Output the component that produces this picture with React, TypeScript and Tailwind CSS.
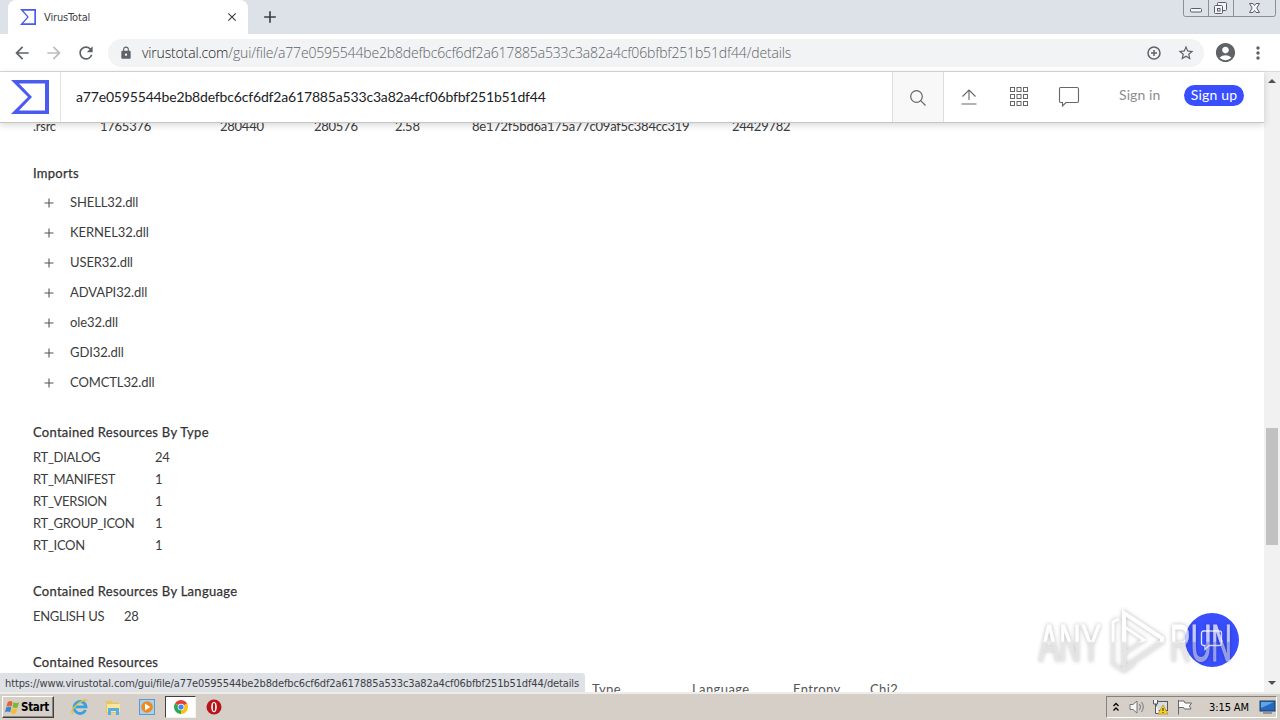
import React from "react";
import { MdArrowBack, MdArrowForward, MdRefresh, MdLock, MdStarBorder, MdAccountCircle, MdMoreVert, MdAdd, MdClose } from "react-icons/md";

const HASH = "a77e0595544be2b8defbc6cf6df2a617885a533c3a82a4cf06bfbf251b51df44";

const SECTION_ROW = [".rsrc", "1765376", "280440", "280576", "2.58", "8e172f5bd6a175a77c09af5c384cc319", "24429782"];

const IMPORTS = ["SHELL32.dll", "KERNEL32.dll", "USER32.dll", "ADVAPI32.dll", "ole32.dll", "GDI32.dll", "COMCTL32.dll"];

const RESOURCE_TYPES: [string, number][] = [
  ["RT_DIALOG", 24],
  ["RT_MANIFEST", 1],
  ["RT_VERSION", 1],
  ["RT_GROUP_ICON", 1],
  ["RT_ICON", 1],
];

export default function App() {
  return (
    <div className="flex flex-col w-[1280px] h-[720px] overflow-hidden bg-white font-['Lato',sans-serif]">
      <TabStrip />
      <Toolbar />
      <div className="relative flex h-[620px] shrink-0">
        <div className="flex flex-col flex-1 min-w-0">
          <VtHeader />
          <Details />
        </div>
        <Scrollbar />
        <div className="absolute left-0 top-[601px] w-[585px] h-[19px] bg-[#dee1e6] rounded-tr-[3px] pl-[5px] pt-[3px] flex items-center text-[11px] tracking-[-0.125px] text-[#3c4043] whitespace-nowrap font-['DejaVu_Sans_Condensed','DejaVu_Sans',sans-serif] [font-stretch:condensed]">
          https://www.virustotal.com/gui/file/{HASH}/details
        </div>
        <div className="absolute left-[1185px] top-[541px] size-[54px] rounded-full bg-[#394eff] flex items-center justify-center">
          <svg width="24" height="24" viewBox="0 0 24 24" fill="none" stroke="#e4e8ff" strokeWidth="1.3">
            <path d="M3.5 3h16a2 2 0 0 1 2 2v10.500a2 2 0 0 1-2 2H9L5 21.500v-4H3.500a2 2 0 0 1-2-2V5a2 2 0 0 1 2-2Z" />
          </svg>
        </div>
        <Watermark />
      </div>
      <Taskbar />
    </div>
  );
}

function VtLogo({ className }: { className: string }) {
  return (
    <svg className={className} viewBox="0 0 38 34" preserveAspectRatio="none">
      <path fillRule="evenodd" fill="#4a5bf0" d="M0 0H38V34H0L17 17ZM8 3.500L21 17L8 30.500H34V3.500Z" />
    </svg>
  );
}

function TabStrip() {
  return (
    <div className="flex h-[34px] shrink-0 bg-[#dde1e8]">
      <div className="ml-2 w-[240px] h-full bg-white rounded-t-[8px] flex items-center pl-3 pr-[9px]">
        <VtLogo className="w-4 h-4" />
        <span className="ml-[8px] mt-[2px] flex-1 text-[11px] tracking-[-0.15px] text-[#3c4043] font-['DejaVu_Sans_Condensed','DejaVu_Sans',sans-serif] [font-stretch:condensed]">VirusTotal</span>
        <MdClose className="size-[14px] text-[#3c4043]" />
      </div>
      <MdAdd className="ml-[12px] mt-[7px] size-5 text-[#3c4043]" />
      <div className="flex-1" />
      {/* window buttons */}
      <svg className="mr-[2px]" width="95" height="18" viewBox="0 0 95 18" fill="none" stroke="#8b8e95">
        <path d="M.5 0V14.500Q.5 16.500 2.500 16.500H90.500Q92.500 16.500 92.500 14.500V0M25.500 0V16M50.500 0V16" />
        <g stroke="#5b5e66" fill="#f4f5f7">
          <rect x="7.500" y="8.500" width="11" height="3.500" rx="1" />
          <rect x="34.500" y="2.500" width="9" height="8" rx="1" />
          <rect x="31.500" y="5.500" width="8" height="8" rx="1" />
          <rect x="34.500" y="8.500" width="2.500" height="2.500" />
          <path d="M66.500 3.500H70L71.500 5.500L73 3.500H76.500L73.800 8L76.500 12.500H73L71.500 10.500L70 12.500H66.500L69.200 8Z" />
        </g>
      </svg>
    </div>
  );
}

function Toolbar() {
  return (
    <div className="flex items-center h-[38px] shrink-0 border-b border-[#d8d9db] bg-white pl-3 text-[#5f6368]">
      <MdArrowBack className="size-5" />
      <MdArrowForward className="size-5 ml-3 text-[#bbbdc0]" />
      <MdRefresh className="size-5 ml-3" />
      <div className="ml-3 w-[1096px] h-7 rounded-full bg-[#f1f3f4] flex items-center pl-[11px] pr-[9px]">
        <MdLock className="size-[14px]" />
        <span className="ml-[9px] flex-1 text-[14px] tracking-[-0.16px] text-[#5f6368] whitespace-nowrap font-['Open_Sans',sans-serif] font-light">
          <span className="text-[#202124]">virustotal.com</span>/gui/file/{HASH}/details
        </span>
        <svg width="16" height="16" viewBox="0 0 16 16" fill="none" stroke="#5f6368" strokeWidth="1.500">
          <circle cx="8" cy="8" r="6" />
          <path d="M8 5v6M5 8h6" />
        </svg>
        <MdStarBorder className="size-[18px] ml-[15px]" />
      </div>
      <MdAccountCircle className="size-[23px] ml-[10px]" />
      <MdMoreVert className="size-5 ml-[11px]" />
    </div>
  );
}

function VtHeader() {
  return (
    <div className="relative z-10 flex h-[51px] shrink-0 bg-white border-b border-[#c6c6c6] shadow-[0_2px_7px_rgba(0,0,0,0.16)]">
      <div className="w-[61px] border-r border-[#e4e4e4] flex items-center pl-[11px]">
        <VtLogo className="w-[38px] h-[34px]" />
      </div>
      <div className="w-[831px] pl-[15px] pb-px flex items-center text-[14px] tracking-[-0.17px] text-[#202124]">{HASH}</div>
      <div className="w-[52px] bg-[#f8f8f8] border-x border-[#dedede] flex items-center justify-center">
        <svg className="mt-px" width="18" height="18" viewBox="0 0 18 18" fill="none" stroke="#666" strokeWidth="1.200">
          <circle cx="7.500" cy="7.500" r="5.800" />
          <path d="M11.700 11.700L16.500 16.500" />
        </svg>
      </div>
      <svg className="ml-[16px] mt-[16px]" width="18" height="18" viewBox="0 0 18 18" fill="none" stroke="#666" strokeWidth="1.100">
        <path d="M9 12V2.500M2.500 8.500L9 2L15.500 8.500M1.500 16H16.500" />
      </svg>
      <svg className="ml-[31px] mt-[14px]" width="20" height="21" viewBox="0 0 20 21" fill="none" stroke="#666" strokeWidth="1">
        {[1.5, 8.5, 15.5].map(y => [1.5, 8, 14.5].map(x => <rect key={`${x}-${y}`} x={x} y={y} width="4" height="4" />))}
      </svg>
      <svg className="ml-[29px] mt-[14px]" width="22" height="22" viewBox="0 0 22 22" fill="none" stroke="#666" strokeWidth="1.100">
        <path d="M2.500 1.500H19Q20.500 1.500 20.500 3V15Q20.500 16.500 19 16.500H8L4.500 20V16.500H2.500Q1.500 16.500 1.500 15V3Q1.500 1.500 2.500 1.500Z" />
      </svg>
      <span className="ml-[39px] mt-[13px] w-[65px] text-[14px] leading-[20px] tracking-[0.1px] text-[#8d8d8d]">Sign in</span>
      <span className="mt-[13px] w-[60px] h-[21px] rounded-full bg-[#394eff] text-white text-[14px] leading-[20px] tracking-[0.15px] text-center">Sign up</span>
    </div>
  );
}

function Details() {
  return (
    <div className="flex-1 min-h-0 overflow-hidden pl-[33px] text-[13px] leading-[22px] text-[#3c3c3c]">
      <div className="-mt-[7px] h-5 leading-[20px] tracking-[-0.25px] grid grid-cols-[67px_120px_94px_81px_77px_260px_100px]">
        {SECTION_ROW.map(cell => <span key={cell}>{cell}</span>)}
      </div>

      <Title className="mt-[27px]">Imports</Title>
      <div className="mt-1">
        {IMPORTS.map(dll => (
          <div key={dll} className="h-[30px] flex items-center pl-[11px]">
            <svg className="mt-px" width="10" height="10" viewBox="0 0 10 10" stroke="#555" strokeWidth="1.100">
              <path d="M5 .5V9.500M.5 5H9.500" />
            </svg>
            <span className="ml-4 tracking-[-0.1px]">{dll}</span>
          </div>
        ))}
      </div>

      <Title className="mt-[25px]">Contained Resources By Type</Title>
      <div className="mt-1 grid grid-cols-[122px_40px] tracking-[-0.3px]">
        {RESOURCE_TYPES.map(([name, count]) => (
          <React.Fragment key={name}>
            <span>{name}</span>
            <span>{count}</span>
          </React.Fragment>
        ))}
      </div>

      <Title className="mt-[25px]">Contained Resources By Language</Title>
      <div className="mt-1 grid grid-cols-[91px_40px] tracking-[-0.3px]">
        <span>ENGLISH US</span>
        <span>28</span>
      </div>

      <Title className="mt-[25px]">Contained Resources</Title>
      <div className="mt-[7px] pl-[559px] grid grid-cols-[100px_101px_77px_60px] leading-[20px] tracking-[0.4px] text-[#555]">
        <span>Type</span>
        <span>Language</span>
        <span>Entropy</span>
        <span>Chi2</span>
      </div>
    </div>
  );
}

function Title({ children, className }: { children: React.ReactNode; className: string }) {
  return <div className={`h-5 leading-[20px] text-[13px] tracking-[0.28px] text-[#333] [-webkit-text-stroke:0.25px_#333] ${className}`}>{children}</div>;
}

function Scrollbar() {
  return (
    <div className="w-4 bg-[#f1f1f1] flex flex-col items-center">
      <svg width="16" height="17" viewBox="0 0 16 17"><path d="M4 11H12L8 7Z" fill="#505050" /></svg>
      <div className="mt-[339px] w-3 h-[117px] bg-[#c1c1c1]" />
      <div className="flex-1" />
      <svg width="16" height="17" viewBox="0 0 16 17"><path d="M4 6H12L8 10Z" fill="#505050" /></svg>
    </div>
  );
}

function Watermark() {
  return (
    <svg className="absolute left-[1030px] top-[530px] opacity-70 drop-shadow-[0_0_2px_rgba(0,0,0,0.4)]" width="210" height="80" viewBox="0 0 210 80">
      <defs>
        <linearGradient id="wm" gradientUnits="userSpaceOnUse" x1="0" y1="0" x2="0" y2="80">
          <stop offset="0.49" stopColor="#fff" />
          <stop offset="0.51" stopColor="#dcdcdc" stopOpacity="0.8" />
        </linearGradient>
      </defs>
      <g fill="url(#wm)" stroke="url(#wm)" strokeWidth="1" fontFamily="'Liberation Sans Narrow','Liberation Sans',sans-serif" fontSize="52">
        <text x="9" y="59" textLength="62" lengthAdjust="spacingAndGlyphs">ANY</text>
        <text x="140" y="59" textLength="62" lengthAdjust="spacingAndGlyphs">RUN</text>
      </g>
      <g fill="none" stroke="url(#wm)" strokeWidth="4">
        <path d="M94 11L132 36V40L94 66Z" />
        <path d="M89 17L83 20V62L94 69L104 62M95 25V51L114 38Z" strokeWidth="3" />
      </g>
    </svg>
  );
}

function Taskbar() {
  return (
    <div className="flex items-center h-[28px] shrink-0 bg-[#d5cfc8] border-t-2 border-t-[#eeece8] text-black font-['DejaVu_Sans_Condensed','DejaVu_Sans',sans-serif] [font-stretch:condensed]">
      <div className="ml-[2px] w-[52px] h-[22px] bg-[#d5cfc8] border border-t-white border-l-white border-r-[#404040] border-b-[#404040] shadow-[inset_-1px_-1px_#8a8680] flex items-center pl-[2px]">
        <svg width="15" height="15" viewBox="0 0 16 16">
          <path d="M3 2Q6 0 8 2L7 7Q4 5 1.500 7Z" fill="#e8602c" />
          <path d="M9 2.500Q12 4 15 2.500L13.500 8Q11 9 8 7.500Z" fill="#7cb83c" />
          <path d="M1.300 8Q4 6 6.800 8L5.500 13Q3 11.500 0 13Z" fill="#3d83d0" />
          <path d="M7.700 8.500Q10 10 13 9L11.500 14.500Q9 15.500 6.300 13.500Z" fill="#f7bd32" />
        </svg>
        <span className="ml-px mt-px text-[11.500px] font-bold tracking-[-0.3px]">Start</span>
      </div>

      <svg className="ml-[17px]" width="18" height="18" viewBox="0 0 18 18" fill="none">
        <path d="M14.500 12A6 6 0 1 1 15 8.800H5" stroke="#36a3de" strokeWidth="2.800" />
        <path d="M2 16Q-1 13 5 7.500Q13 .5 16.500 2.500" stroke="#efbd3a" strokeWidth="1.400" />
      </svg>
      <svg className="ml-[16px]" width="16" height="17" viewBox="0 0 16 17">
        <path d="M1 2H6L7 3.500H14V14H1Z" fill="#e9c55c" />
        <path d="M2 5H15V13H2Z" fill="#f9e59c" />
        <path d="M3 16V9H14V16H11V12H6V16Z" fill="#58aee0" />
      </svg>
      <svg className="ml-[18px]" width="16" height="16" viewBox="0 0 16 16">
        <rect x=".5" y=".5" width="15" height="15" fill="#a7d1f0" stroke="#5a9ad0" />
        <circle cx="8" cy="8" r="5.800" fill="#f08a1c" />
        <path d="M6 4.500L11.300 8L6 11.500Z" fill="#fff" />
      </svg>
      <div className="ml-[10px] w-[31px] h-[22px] bg-white border border-t-[#404040] border-l-[#404040] border-r-[#f4f2ee] border-b-[#f4f2ee] flex items-center justify-center">
        <svg width="14" height="14" viewBox="0 0 14 14">
          <path d="M7 7L.94 3.500A7 7 0 0 1 13.060 3.500Z" fill="#e34133" />
          <path d="M7 7L13.060 3.500A7 7 0 0 1 7 14Z" fill="#fbc116" />
          <path d="M7 7V14A7 7 0 0 1 .94 3.500Z" fill="#2da94f" />
          <circle cx="7" cy="7" r="3.300" fill="#fff" />
          <circle cx="7" cy="7" r="2.600" fill="#4285f4" />
        </svg>
      </div>
      <svg className="ml-[10px]" width="16" height="16" viewBox="0 0 16 16">
        <circle cx="8" cy="8" r="7.500" fill="#b9141a" />
        <ellipse cx="8" cy="8" rx="2.800" ry="5.300" fill="#fff" />
        <ellipse cx="8" cy="8" rx="1.200" ry="4.200" fill="#b9141a" />
      </svg>
      <div className="flex-1" />

      <div className="mr-[3px] w-[171px] h-[22px] border border-t-[#85817b] border-l-[#85817b] border-r-white border-b-white flex items-center pl-[6px]">
        <svg width="6" height="10" viewBox="0 0 6 10" fill="none" stroke="#000" strokeWidth="1.300">
          <path d="M.5 4L3 1.500L5.500 4M.5 8.500L3 6L5.500 8.500" />
        </svg>
        <svg className="ml-[10px]" width="17" height="16" viewBox="0 0 17 16" fill="#f5f5f5" stroke="#77767a">
          <path d="M1 5.500H4L8 2V14L4 10.500H1Z" />
          <path d="M10.500 5Q12.500 8 10.500 11M12.500 3Q16 8 12.500 13" fill="none" />
        </svg>
        <svg className="ml-[6px]" width="17" height="16" viewBox="0 0 17 16">
          <rect x="4.500" y="2.500" width="11" height="9" fill="#d8dcdf" stroke="#56585c" />
          <path d="M1.500 1V5H5.500V1M3.500 5V14.500H8" fill="#f4f4f4" stroke="#56585c" />
          <path d="M11 6L16 15H6Z" fill="#f8d32a" stroke="#b18a12" strokeWidth=".7" />
          <path d="M11 9V12M11 13V14" stroke="#222" />
        </svg>
        <svg className="ml-[7px]" width="17" height="16" viewBox="0 0 17 16" fill="#fafafa" stroke="#66676b">
          <path d="M2.500 1V15.500M2.500 2H8L9 4H15.500L13.500 7L15 10H8.500L7.500 8.500H2.500" />
        </svg>
        <span className="ml-[16px] mt-[2px] text-[11px] tracking-[-0.1px] whitespace-nowrap">3:15 AM</span>
        <svg className="ml-auto" width="17" height="16" viewBox="0 0 17 16">
          <rect x="1" y="2" width="15" height="10" fill="#2469bd" stroke="#1a3c68" />
          <path d="M2 3H15L2 9Z" fill="#5fa6e6" />
          <path d="M4 14H13" stroke="#4c5a6a" />
        </svg>
      </div>
    </div>
  );
}
